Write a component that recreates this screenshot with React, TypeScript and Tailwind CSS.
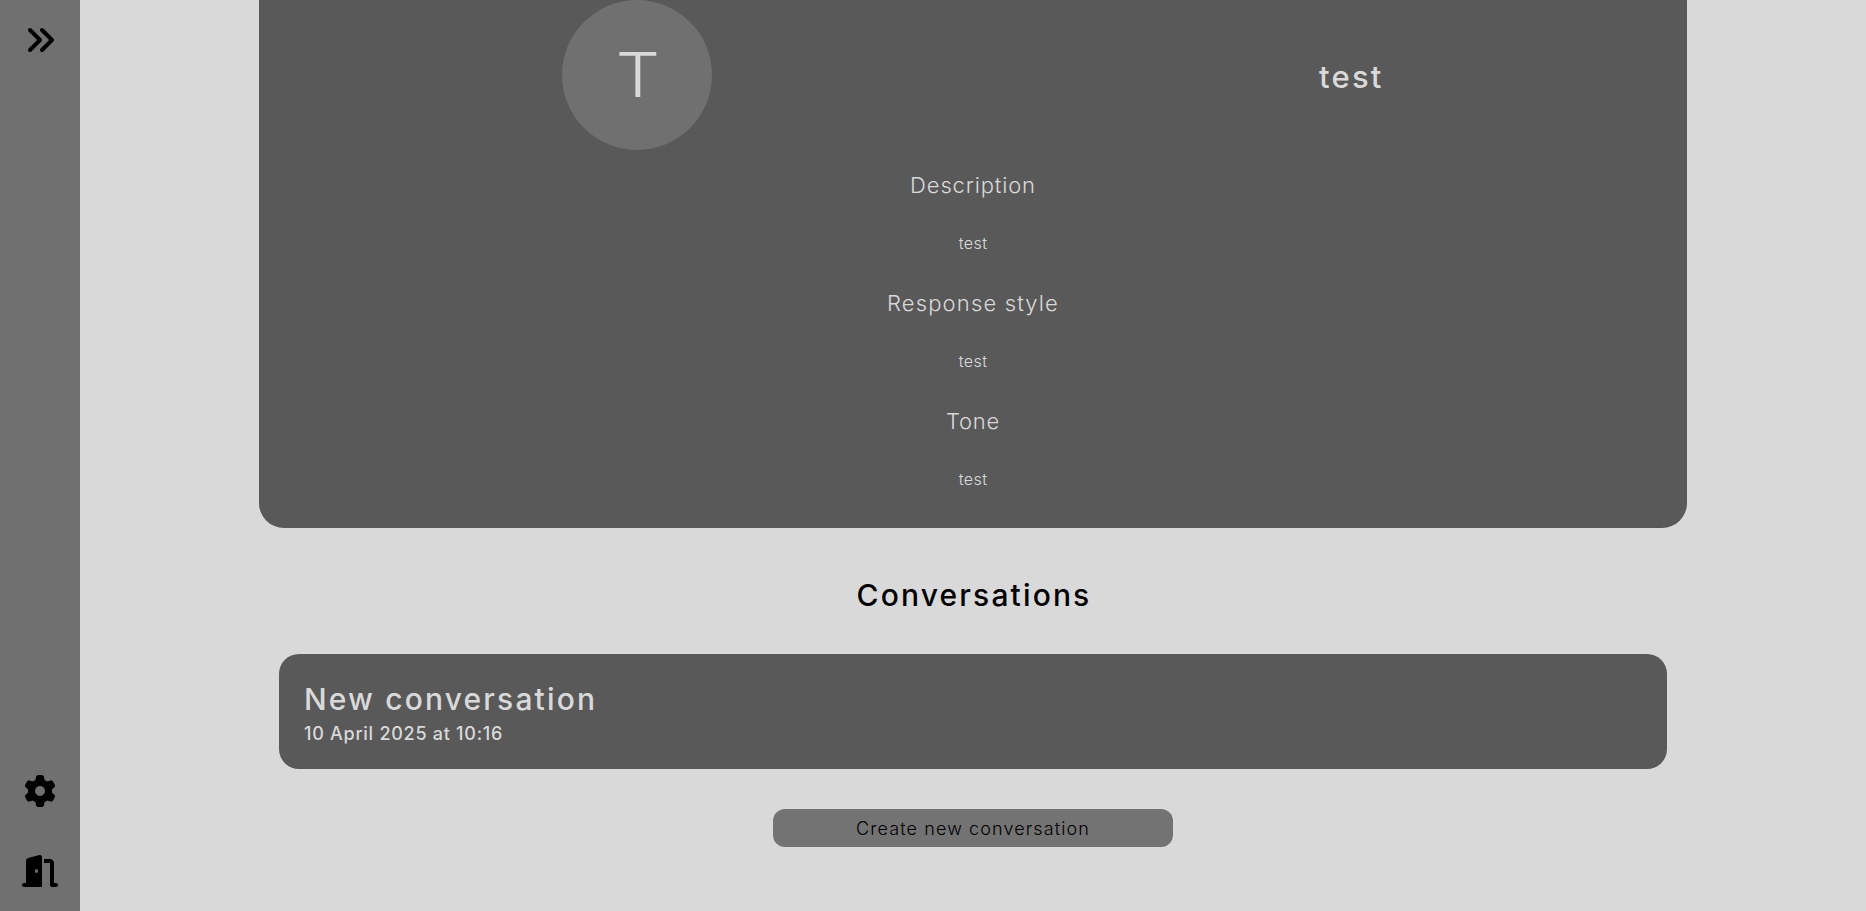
import { FaAnglesRight, FaDoorOpen, FaGear } from "react-icons/fa6";

const sections = [
  { title: "Description", value: "test", spacing: "tracking-[0.85px]" },
  { title: "Response style", value: "test", spacing: "tracking-[1.15px]" },
  { title: "Tone", value: "test", spacing: "tracking-[0.7px]" },
];

function Sidebar() {
  return (
    <aside className="flex h-full w-20 shrink-0 flex-col items-center bg-[#707070] pt-6 pb-6 text-[32px] text-black">
      <button aria-label="Expand">
        <FaAnglesRight />
      </button>
      <div className="mt-auto flex flex-col items-center gap-12">
        <button aria-label="Settings">
          <FaGear />
        </button>
        <button aria-label="Log out">
          <FaDoorOpen className="h-8 w-9" />
        </button>
      </div>
    </aside>
  );
}

function CharacterPanel() {
  return (
    <section className="h-[528px] w-[1428px] rounded-b-[25px] bg-[#595959] text-[#d9d9d9]">
      <div className="flex h-[150px] items-center justify-around">
        <div className="flex size-[150px] items-center justify-center rounded-full bg-[#707070] text-[62px] leading-none font-[350]">
          <span className="scale-x-112">T</span>
        </div>
        <h1 className="pt-0.5 text-[31px] leading-none font-medium tracking-[2.2px]">test</h1>
      </div>
      <div className="pt-1.5 text-center">
        {sections.map((s) => (
          <div key={s.title} className="h-[118px]">
            <h2 className={`text-[22px] leading-[59px] font-light ${s.spacing}`}>{s.title}</h2>
            <p className="text-[16px] leading-[57px] font-light tracking-[0.45px]">{s.value}</p>
          </div>
        ))}
      </div>
    </section>
  );
}

export default function App() {
  return (
    <div className="flex h-screen overflow-hidden bg-[#d9d9d9] font-['Inter',sans-serif]">
      <Sidebar />
      <main className="flex flex-1 flex-col items-center">
        <CharacterPanel />
        <h2 className="mt-[47px] pl-0.5 text-[30px] leading-10 font-medium tracking-[2.15px] text-black">
          Conversations
        </h2>
        <article className="mt-[39px] flex h-[115px] w-[1388px] flex-col rounded-[20px] bg-[#595959] pt-[26px] pl-[25px] text-[#d9d9d9]">
          <h3 className="text-[30px] leading-[38px] font-medium tracking-[2.15px]">New conversation</h3>
          <p className="text-[18px] leading-[31px] font-medium tracking-[0.73px]">10 April 2025 at 10:16</p>
        </article>
        <button className="mt-10 h-[38px] w-[400px] rounded-xl bg-[#737373] pt-0.5 text-[18px] leading-9 font-light tracking-[1.1px] text-black">
          Create new conversation
        </button>
      </main>
    </div>
  );
}
